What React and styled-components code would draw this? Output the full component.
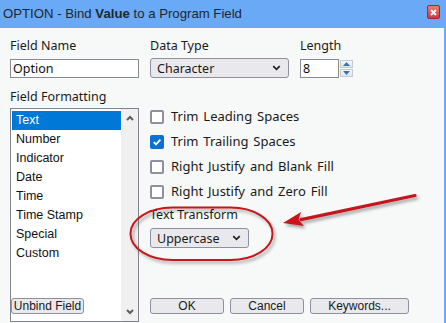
import React from "react";
import styled, { createGlobalStyle } from "styled-components";

const GlobalStyle = createGlobalStyle`
  html, body {
    margin: 0;
    padding: 0;
    background: #f7f9f9;
  }
`;

const uiFont = `"Noto Sans", "Open Sans", sans-serif`;
const winFont = `"Liberation Sans", Arial, sans-serif`;

const Window = styled.div`
  position: relative;
  width: 446px;
  height: 323px;
  box-sizing: border-box;
  border-right: 2px solid #6aaaf5;
  background: #f7f9f9;
  display: flex;
  flex-direction: column;
  overflow: hidden;
`;

const TitleBar = styled.div`
  height: 28px;
  flex: none;
  background: #69a9f5;
  display: flex;
  align-items: flex-start;
  justify-content: space-between;
  padding: 0 4px 0 3px;
`;

const Title = styled.div`
  padding-top: 6px;
  font: 13.2px/16px ${winFont};
  color: #1d2733;
  b {
    font-weight: bold;
  }
`;

const CloseButton = styled.div`
  margin-top: 5px;
  width: 13px;
  height: 14px;
  box-sizing: border-box;
  border: 1px solid #a3262a;
  border-radius: 2px;
  background: linear-gradient(#ee7a7a, #cf3b3d);
  display: flex;
  align-items: center;
  justify-content: center;
`;

const Body = styled.div`
  flex: 1;
  min-height: 0;
  display: grid;
  grid-template-columns: 129px 1fr;
  column-gap: 11px;
  padding: 9px 10px 0 10px;
`;

const Column = styled.div`
  display: flex;
  flex-direction: column;
  min-height: 0;
  padding-bottom: ${(p) => p.$bottom || 0}px;
`;

const Label = styled.div`
  font: 12.5px/17px ${uiFont};
  color: #1a1a1a;
  margin-top: ${(p) => p.$top || 0}px;
  margin-bottom: ${(p) => (p.$gap === undefined ? 5 : p.$gap)}px;
  white-space: nowrap;
`;

const TextInput = styled.div`
  box-sizing: border-box;
  width: ${(p) => p.$width}px;
  height: 19px;
  border: 1px solid #8a8a93;
  background: #fff;
  font: 12.5px/17px ${uiFont};
  color: #111;
  padding-left: 2px;
`;

const ListBox = styled.div`
  position: relative;
  flex: 1;
  min-height: 0;
  box-sizing: border-box;
  border: 1px solid #83838d;
  background: #fff;
  display: flex;
`;

const Items = styled.div`
  flex: 1;
  padding: 2px 0 0 1px;
`;

const Item = styled.div`
  height: 19px;
  padding-left: 4px;
  font: 12.5px/19px ${winFont};
  color: ${(p) => (p.$selected ? "#fff" : "#111")};
  background: ${(p) => (p.$selected ? "#0078d7" : "transparent")};
`;

const ScrollBar = styled.div`
  width: 17px;
  background: #f0f0f0;
  display: flex;
  flex-direction: column;
  justify-content: space-between;
  align-items: center;
  padding: 6px 0 6px;
`;

const SmallButton = styled.div`
  box-sizing: border-box;
  width: ${(p) => p.$width}px;
  height: 16px;
  border: 1px solid #8f8f9d;
  border-radius: 3px;
  background: #e9e9ed;
  font: 12px/14px ${winFont};
  color: #1a1a1a;
  text-align: center;
`;

const UnbindButton = styled(SmallButton)`
  position: absolute;
  left: 0;
  bottom: 7px;
`;

const TopRow = styled.div`
  display: flex;
  gap: 11px;
`;

const Field = styled.div`
  display: flex;
  flex-direction: column;
`;

const Select = styled.div`
  box-sizing: border-box;
  width: ${(p) => p.$width}px;
  height: 20px;
  border: 1px solid #8f8f9d;
  border-radius: 3px;
  background: #e9e9ed;
  display: flex;
  align-items: center;
  justify-content: space-between;
  padding: 0 7px 0 6px;
  font: 12.5px/17px ${uiFont};
  color: #1a1a1a;
`;

const SpinRow = styled.div`
  display: flex;
  margin-top: 1px;
`;

const Spinner = styled.div`
  width: 14px;
  height: 19px;
  display: flex;
  flex-direction: column;
  justify-content: space-between;
  padding: 1px 0 1px 1px;
  box-sizing: border-box;
`;

const SpinButton = styled.div`
  height: 8px;
  box-sizing: border-box;
  border: 1px solid #c4cad3;
  background: linear-gradient(#f7f9fc, #dde3ec);
  display: flex;
  align-items: center;
  justify-content: center;
`;

const Checks = styled.div`
  margin-top: 26px;
  display: flex;
  flex-direction: column;
`;

const CheckRow = styled.div`
  height: 25px;
  display: flex;
  align-items: center;
  gap: 7px;
  font: 13px/17px ${uiFont};
  word-spacing: 1.5px;
  color: #1a1a1a;
  white-space: nowrap;
`;

const Box = styled.div`
  flex: none;
  box-sizing: border-box;
  width: 14px;
  height: 14px;
  border-radius: 2px;
  border: ${(p) => (p.$checked ? "none" : "2px solid #8f8f9d")};
  background: ${(p) => (p.$checked ? "#0b6fd8" : "#fff")};
  display: flex;
  align-items: center;
  justify-content: center;
`;

const ButtonRow = styled.div`
  margin-top: auto;
  display: flex;
  gap: 6px;
`;

const Overlay = styled.svg`
  position: absolute;
  left: 0;
  top: 0;
  pointer-events: none;
`;

const Chevron = ({ up, size = 8, color = "#5c5c5c", width = 2 }) => (
  <svg width={size} height={size / 2 + 2} viewBox="0 0 8 6">
    <path
      d={up ? "M1 5 L4 2 L7 5" : "M1 1 L4 4 L7 1"}
      fill="none"
      stroke={color}
      strokeWidth={width}
    />
  </svg>
);

const Tri = ({ up }) => (
  <svg width="7" height="4" viewBox="0 0 7 4">
    <path d={up ? "M0 4 L3.5 0 L7 4Z" : "M0 0 L3.5 4 L7 0Z"} fill="#3c6fbf" />
  </svg>
);

const formats = [
  "Text",
  "Number",
  "Indicator",
  "Date",
  "Time",
  "Time Stamp",
  "Special",
  "Custom",
];

const options = [
  { label: "Trim Leading Spaces", checked: false },
  { label: "Trim Trailing Spaces", checked: true },
  { label: "Right Justify and Blank Fill", checked: false },
  { label: "Right Justify and Zero Fill", checked: false },
];

export default function App() {
  return (
    <Window>
      <GlobalStyle />
      <TitleBar>
        <Title>
          OPTION - Bind <b>Value</b> to a Program Field
        </Title>
        <CloseButton>
          <svg width="7" height="7" viewBox="0 0 7 7">
            <path d="M1 1 L6 6 M6 1 L1 6" stroke="#fff" strokeWidth="1.8" />
          </svg>
        </CloseButton>
      </TitleBar>
      <Body>
        <Column $bottom={1}>
          <Label>Field Name</Label>
          <TextInput $width={129}>Option</TextInput>
          <Label $top={10} $gap={3}>
            Field Formatting
          </Label>
          <ListBox>
            <Items>
              {formats.map((f, i) => (
                <Item key={f} $selected={i === 0}>
                  {f}
                </Item>
              ))}
            </Items>
            <ScrollBar>
              <Chevron up />
              <Chevron />
            </ScrollBar>
            <UnbindButton $width={73}>Unbind Field</UnbindButton>
          </ListBox>
        </Column>
        <Column $bottom={9}>
          <TopRow>
            <Field>
              <Label $gap={4}>Data Type</Label>
              <Select $width={139}>
                Character
                <Chevron size={9} color="#222" width={1.6} />
              </Select>
            </Field>
            <Field>
              <Label $gap={4}>Length</Label>
              <SpinRow>
                <TextInput $width={39}>8</TextInput>
                <Spinner>
                  <SpinButton>
                    <Tri up />
                  </SpinButton>
                  <SpinButton>
                    <Tri />
                  </SpinButton>
                </Spinner>
              </SpinRow>
            </Field>
          </TopRow>
          <Checks>
            {options.map((o) => (
              <CheckRow key={o.label}>
                <Box $checked={o.checked}>
                  {o.checked && (
                    <svg width="10" height="10" viewBox="0 0 10 10">
                      <path
                        d="M1.8 5.2 L4 7.4 L8.4 2.6"
                        fill="none"
                        stroke="#fff"
                        strokeWidth="1.8"
                      />
                    </svg>
                  )}
                </Box>
                {o.label}
              </CheckRow>
            ))}
          </Checks>
          <Label $top={2}>Text Transform</Label>
          <Select $width={99}>
            Uppercase
            <Chevron size={9} color="#222" width={1.6} />
          </Select>
          <ButtonRow>
            <SmallButton $width={74}>OK</SmallButton>
            <SmallButton $width={74}>Cancel</SmallButton>
            <SmallButton $width={99}>Keywords...</SmallButton>
          </ButtonRow>
        </Column>
      </Body>
      <Overlay width="446" height="323" viewBox="0 0 446 323">
        <defs>
          <filter id="shadow" x="-20%" y="-20%" width="140%" height="160%">
            <feDropShadow
              dx="2"
              dy="2.5"
              stdDeviation="1.6"
              floodColor="#000"
              floodOpacity="0.35"
            />
          </filter>
        </defs>
        <g filter="url(#shadow)">
          <rect
            x="130.5"
            y="207.5"
            width="142"
            height="52.5"
            rx="42"
            ry="26"
            fill="none"
            stroke="#c4161c"
            strokeWidth="2"
          />
          <path d="M415 195.5 L301 219.6" stroke="#c4161c" strokeWidth="3.2" strokeLinecap="round" />
          <path d="M283 223 L301 212 L298.5 219.8 L304 226 Z" fill="#c4161c" />
        </g>
      </Overlay>
    </Window>
  );
}
